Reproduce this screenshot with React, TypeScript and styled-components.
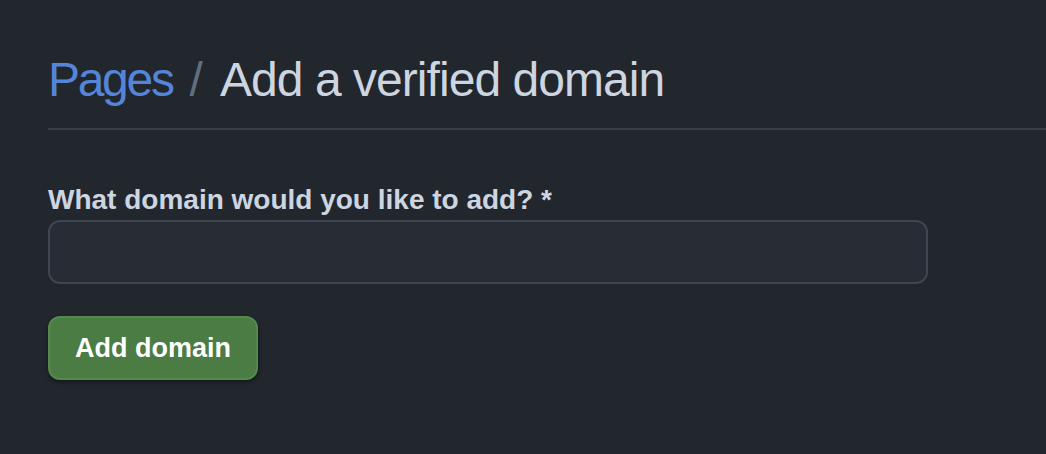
import React from "react";
import styled, { createGlobalStyle } from "styled-components";

const Global = createGlobalStyle`
  html, body { margin: 0; padding: 0; background: #22272e; }
  body { font-family: "Liberation Sans", Arial, sans-serif; }
`;

const Page = styled.div`
  width: 1046px;
  height: 454px;
  background: #22272e;
  padding: 48px 0 0 48px;
  box-sizing: border-box;
  overflow: hidden;
`;

const Header = styled.div`
  display: flex;
  align-items: baseline;
  gap: 17px;
  height: 82px;
  border-bottom: 2px solid #373e47;
  margin-right: -20px;
  box-sizing: border-box;
`;

const Crumb = styled.a`
  font-size: 48px;
  letter-spacing: -2.3px;
  color: #5585d8;
  text-decoration: none;
  line-height: 64px;
`;

const Sep = styled.span`
  font-size: 48px;
  color: #636e7b;
  line-height: 64px;
`;

const Title = styled.h1`
  margin: 0;
  font-weight: 400;
  font-size: 48px;
  letter-spacing: -0.95px;
  color: #cdd5e0;
  line-height: 64px;
`;

const Form = styled.form`
  display: flex;
  flex-direction: column;
  align-items: flex-start;
  padding-top: 54px;
`;

const Label = styled.label`
  font-size: 28px;
  font-weight: 700;
  color: #cdd5e0;
  line-height: 32px;
  margin-bottom: 4px;
`;

const Input = styled.input`
  width: 880px;
  height: 64px;
  box-sizing: border-box;
  background: #282c35;
  border: 2px solid #40464f;
  border-radius: 12px;
  outline: none;
  margin-bottom: 32px;
`;

const Button = styled.button`
  height: 64px;
  padding: 0 25px;
  background: #4a7c44;
  border: 2px solid #548a4b;
  border-radius: 12px;
  color: #ffffff;
  font-family: "Liberation Sans", Arial, sans-serif;
  font-size: 27px;
  font-weight: 700;
  box-shadow: 0 2px 4px rgba(0, 0, 0, 0.45);
  cursor: pointer;
`;

export default function App() {
  return (
    <>
      <Global />
      <Page>
        <Header>
          <Crumb href="#">Pages</Crumb>
          <Sep>/</Sep>
          <Title>Add a verified domain</Title>
        </Header>
        <Form onSubmit={(e) => e.preventDefault()}>
          <Label htmlFor="domain">What domain would you like to add? *</Label>
          <Input id="domain" type="text" />
          <Button type="submit">Add domain</Button>
        </Form>
      </Page>
    </>
  );
}
